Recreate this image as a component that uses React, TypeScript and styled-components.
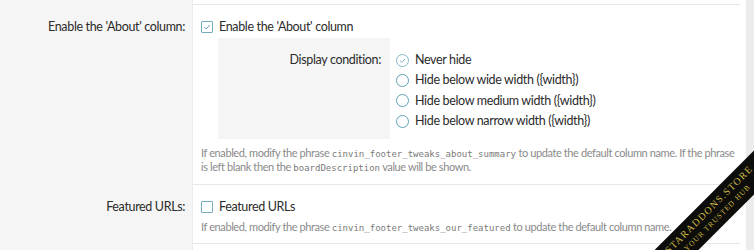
import React from "react";
import styled, { createGlobalStyle } from "styled-components";

const Global = createGlobalStyle`
  html, body { margin: 0; padding: 0; background: #fff; }
  body { font-family: "Lato", "Noto Sans", sans-serif; color: #2b2b2b; }
  #root { width: 754px; height: 250px; overflow: hidden; }
`;

const Page = styled.div`
  position: relative;
  display: flex;
  width: 754px;
  height: 250px;
  overflow: hidden;
  background: #fff;
`;

const Form = styled.div`
  flex: 1;
  display: flex;
  flex-direction: column;
  background: linear-gradient(to right, #f5f5f5 0, #f5f5f5 192px, #ebebeb 192px, #ebebeb 193px, #fff 193px);
`;

const ScrollGap = styled.div`
  width: 6px;
  background: #fff;
`;

const ScrollStrip = styled.div`
  width: 8px;
  background: #ececec;
`;

const Row = styled.div<{ $top?: boolean }>`
  display: grid;
  grid-template-columns: 193px 1fr;
  height: ${(p) => (p.$top ? "5px" : "auto")};
`;

const Label = styled.div`
  text-align: right;
  padding: 12px 8px 0 0;
  font-size: 12.5px;
  letter-spacing: -0.35px;
  line-height: 20px;
  color: #2b2b2b;
`;

const Content = styled.div<{ $pb?: number }>`
  padding: 12px 0 ${(p) => p.$pb ?? 10}px 8px;
  border-bottom: 1px solid #e7e7e7;
  min-width: 0;
`;

const TopContent = styled.div`
  border-bottom: 1px solid #e7e7e7;
`;

const CheckLine = styled.label`
  display: flex;
  align-items: center;
  gap: 6px;
  font-size: 12.5px;
  letter-spacing: -0.35px;
  line-height: 20px;
  color: #2b2b2b;
`;

const Box = styled.span`
  width: 12px;
  height: 12px;
  box-sizing: border-box;
  border: 1px solid #74adbf;
  border-radius: 1px;
  background: #fff;
  display: flex;
  align-items: center;
  justify-content: center;
  flex: none;
`;

const Nested = styled.div`
  display: grid;
  grid-template-columns: 172px 1fr;
  margin: 1px 0 0 17px;
`;

const NestedLabel = styled.div`
  background: #f5f5f5;
  text-align: right;
  padding: 12px 9px 8px 0;
  font-size: 12.5px;
  letter-spacing: -0.35px;
  line-height: 20px;
  color: #2b2b2b;
`;

const NestedContent = styled.div`
  padding: 12px 0 8px 7px;
  display: flex;
  flex-direction: column;
`;

const RadioLine = styled.label`
  display: flex;
  align-items: center;
  gap: 6px;
  font-size: 12.5px;
  letter-spacing: -0.35px;
  line-height: 20.3px;
  color: #2b2b2b;
`;

const Circle = styled.span<{ $checked?: boolean }>`
  width: 13px;
  height: 13px;
  margin-left: -1px;
  box-sizing: border-box;
  border: 1px solid ${(p) => (p.$checked ? "#86b9c9" : "#5fa1b6")};
  border-radius: 50%;
  display: flex;
  align-items: center;
  justify-content: center;
  flex: none;
`;

const Help = styled.div<{ $mt: number }>`
  margin-top: ${(p) => p.$mt}px;
  font-size: 11px;
  letter-spacing: -0.4px;
  line-height: 14px;
  color: #8a8a8a;
  padding-right: 0;
`;

const Code = styled.code`
  font-family: "DejaVu Sans Mono", "Liberation Mono", monospace;
  font-size: 9px;
  letter-spacing: 0;
  line-height: 1;
  color: #7a7a7a;
`;

const Ribbon = styled.div`
  position: absolute;
  left: 603px;
  top: 198px;
  width: 220px;
  height: 31px;
  background: #0d0d0b;
  transform: rotate(-45deg);
  display: flex;
  flex-direction: column;
  align-items: center;
  justify-content: center;
  color: #cdbb45;
  font-family: "Liberation Serif", serif;
  text-transform: uppercase;
  line-height: 1;
`;

const RibbonMain = styled.span`
  font-size: 10px;
  letter-spacing: 1.2px;
  margin-bottom: 3px;
`;

const RibbonSub = styled.span`
  font-size: 7.5px;
  letter-spacing: 1px;
`;

const CheckMark = () => (
  <svg width="8" height="8" viewBox="0 0 8 8">
    <path d="M1.3 4.2 L3.2 6 L6.8 2" fill="none" stroke="#6aa6b9" strokeWidth="1" />
  </svg>
);

const RadioCheck = () => (
  <svg width="9" height="9" viewBox="0 0 9 9">
    <path d="M2 4.7 L3.8 6.3 L7 3" fill="none" stroke="#7fb4c5" strokeWidth="1" />
  </svg>
);

const options = [
  { text: "Never hide", checked: true },
  { text: "Hide below wide width ({width})" },
  { text: "Hide below medium width ({width})" },
  { text: "Hide below narrow width ({width})" },
];

export default function App() {
  return (
    <>
      <Global />
      <Page>
        <Form>
          <Row $top>
            <div />
            <TopContent />
          </Row>
          <Row>
            <Label>Enable the 'About' column:</Label>
            <Content $pb={10}>
              <CheckLine>
                <Box>
                  <CheckMark />
                </Box>
                Enable the 'About' column
              </CheckLine>
              <Nested>
                <NestedLabel>Display condition:</NestedLabel>
                <NestedContent>
                  {options.map((o) => (
                    <RadioLine key={o.text}>
                      <Circle $checked={o.checked}>{o.checked && <RadioCheck />}</Circle>
                      {o.text}
                    </RadioLine>
                  ))}
                </NestedContent>
              </Nested>
              <Help $mt={7}>
                If enabled, modify the phrase <Code>cinvin_footer_tweaks_about_summary</Code> to update the default
                column name. If the phrase is left blank then the <Code>boardDescription</Code> value will be shown.
              </Help>
            </Content>
          </Row>
          <Row>
            <Label>Featured URLs:</Label>
            <Content $pb={9}>
              <CheckLine>
                <Box />
                Featured URLs
              </CheckLine>
              <Help $mt={3}>
                If enabled, modify the phrase <Code>cinvin_footer_tweaks_our_featured</Code> to update the default
                column name.
              </Help>
            </Content>
          </Row>
        </Form>
        <ScrollGap />
        <ScrollStrip />
        <Ribbon>
          <RibbonMain>StarAddons.Store</RibbonMain>
          <RibbonSub>Your Trusted Hub</RibbonSub>
        </Ribbon>
      </Page>
    </>
  );
}
